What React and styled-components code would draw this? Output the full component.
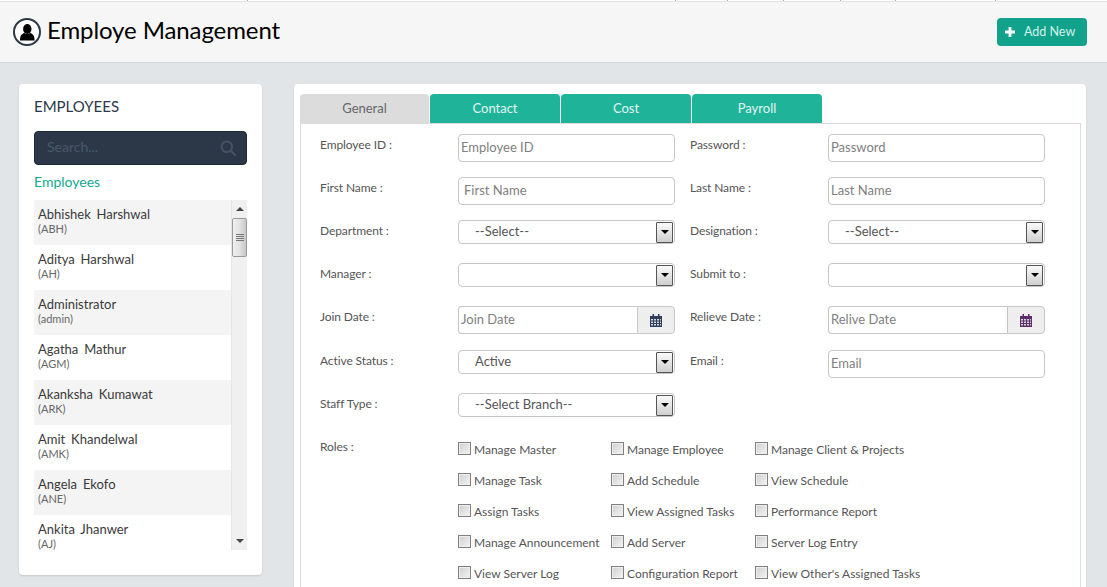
import styled, { createGlobalStyle } from "styled-components";

const employees = [
  ["Abhishek Harshwal", "(ABH)"],
  ["Aditya Harshwal", "(AH)"],
  ["Administrator", "(admin)"],
  ["Agatha Mathur", "(AGM)"],
  ["Akanksha Kumawat", "(ARK)"],
  ["Amit Khandelwal", "(AMK)"],
  ["Angela Ekofo", "(ANE)"],
  ["Ankita Jhanwer", "(AJ)"],
];

const roles = [
  ["Manage Master", "Manage Employee", "Manage Client & Projects"],
  ["Manage Task", "Add Schedule", "View Schedule"],
  ["Assign Tasks", "View Assigned Tasks", "Performance Report"],
  ["Manage Announcement", "Add Server", "Server Log Entry"],
  ["View Server Log", "Configuration Report", "View Other's Assigned Tasks"],
];

// widths of the nav cells cut off at the very top of the page
const navCells = [248, 428, 52, 56, 57, 55, 100];

const UserIcon = () => (
  <svg width="30" height="30" viewBox="0 0 30 30">
    <circle cx="15" cy="15" r="13" fill="#fff" stroke="#2c3848" strokeWidth="2" />
    <ellipse cx="15.300" cy="12" rx="4.200" ry="4.900" fill="#000" />
    <path d="M8 23.500c0-4.500 1.500-6.700 4.500-7.500 1.700 1.200 3.900 1.200 5.600 0 3 .8 4.500 3 4.500 7.500z" fill="#000" />
  </svg>
);

const SearchIcon = () => (
  <svg width="16" height="16" viewBox="0 0 16 16" fill="none" stroke="#445263" strokeWidth="2">
    <circle cx="6.800" cy="6.800" r="5.300" />
    <path d="M10.800 10.800l4.200 4.200" strokeLinecap="round" />
  </svg>
);

const PlusIcon = () => (
  <svg width="10" height="10" viewBox="0 0 10 10">
    <path d="M3.600 0h2.800v3.600H10v2.800H6.400V10H3.600V6.400H0V3.600h3.600z" fill="#fff" />
  </svg>
);

const CalendarIcon = ({ color }) => (
  <svg width="12" height="13" viewBox="0 0 12 13">
    <path d="M0 2h12v11H0z" fill={color} />
    <path d="M2.500 0h1.500v3H2.500zM8 0h1.500v3H8z" fill={color} />
    <path
      d="M1 5h2v1.500H1zM4 5h2v1.500H4zM7 5h2v1.500H7zM10 5h1v1.500h-1zM1 7.500h2V9H1zM4 7.500h2V9H4zM7 7.500h2V9H7zM10 7.500h1V9h-1zM1 10h2v1.500H1zM4 10h2v1.500H4zM7 10h2v1.500H7zM10 10h1v1.500h-1z"
      fill="#d8d8d8"
    />
  </svg>
);

const Field = ({ label, placeholder, wide }) => (
  <>
    <Label>{label}</Label>
    <TextInput placeholder={placeholder} $wide={wide} />
  </>
);

const SelectField = ({ label, value }) => (
  <>
    <Label>{label}</Label>
    <SelectBox>
      <span>{value}</span>
      <SelectArrow />
    </SelectBox>
  </>
);

const DateField = ({ label, placeholder, color }) => (
  <>
    <Label>{label}</Label>
    <DateGroup>
      <DateInput placeholder={placeholder} />
      <DateAddon>
        <CalendarIcon color={color} />
      </DateAddon>
    </DateGroup>
  </>
);

const App = () => {
  return (
    <>
      <GlobalStyle />
      <TopStrip>
        {navCells.map((w, i) => (
          <NavCell key={i} $w={w} />
        ))}
      </TopStrip>
      <Header>
        <Title>
          <UserIcon />
          <h1>Employe Management</h1>
        </Title>
        <AddButton>
          <PlusIcon />
          Add New
        </AddButton>
      </Header>
      <Page>
        <Sidebar>
          <SideTitle>EMPLOYEES</SideTitle>
          <SearchBar>
            <input placeholder="Search..." />
            <SearchIcon />
          </SearchBar>
          <ListTitle>Employees</ListTitle>
          <ListBox>
            <EmployeeList>
              {employees.map(([name, code]) => (
                <EmployeeRow key={code}>
                  <strong>{name}</strong>
                  <small>{code}</small>
                </EmployeeRow>
              ))}
            </EmployeeList>
            <Scrollbar>
              <ScrollArrow $up />
              <ScrollThumb>
                <i />
                <i />
                <i />
                <i />
              </ScrollThumb>
              <ScrollTrack />
              <ScrollArrow />
            </Scrollbar>
          </ListBox>
        </Sidebar>
        <Main>
          <Tabs>
            <Tab $active>General</Tab>
            <Tab>Contact</Tab>
            <Tab>Cost</Tab>
            <Tab>Payroll</Tab>
          </Tabs>
          <TabPanel>
            <FormGrid>
              <Field label="Employee ID :" placeholder="Employee ID" />
              <Field label="Password :" placeholder="Password" />
              <Field label="First Name :" placeholder="First Name" wide />
              <Field label="Last Name :" placeholder="Last Name" />
              <SelectField label="Department :" value="--Select--" />
              <SelectField label="Designation :" value="--Select--" />
              <SelectField label="Manager :" value="" />
              <SelectField label="Submit to :" value="" />
              <DateField label="Join Date :" placeholder="Join Date" color="#2c3e5c" />
              <DateField label="Relieve Date :" placeholder="Relive Date" color="#5c2c6a" />
              <SelectField label="Active Status :" value="Active" />
              <Field label="Email :" placeholder="Email" />
              <SelectField label="Staff Type :" value="--Select Branch--" />
            </FormGrid>
            <RolesRow>
              <Label>Roles :</Label>
              <RolesGrid>
                {roles.flat().map((role) => (
                  <RoleItem key={role}>
                    <CheckBox />
                    {role}
                  </RoleItem>
                ))}
              </RolesGrid>
            </RolesRow>
          </TabPanel>
        </Main>
      </Page>
    </>
  );
};

const GlobalStyle = createGlobalStyle`
  html, body {
    margin: 0;
    height: 587px;
    overflow: hidden;
    background: #e2e5e8;
    font-family: Lato, "Liberation Sans", sans-serif;
  }
  * {
    box-sizing: border-box;
  }
`;
const TopStrip = styled.div`
  height: 2px;
  display: flex;
  background: #fff;
  border-bottom: 1px solid #e4e4e4;
`;
const NavCell = styled.div`
  width: ${(p) => p.$w}px;
  height: 1px;
  border-right: 1px solid #aaa;
`;
const Header = styled.header`
  height: 61px;
  display: flex;
  align-items: center;
  justify-content: space-between;
  padding: 0 20px 0 12px;
  background: #f6f6f6;
  border-bottom: 1px solid #d4d7da;
`;
const Title = styled.div`
  display: flex;
  align-items: center;
  gap: 5px;
  h1 {
    margin: 0 0 5px;
    font-size: 24px;
    font-weight: 400;
    letter-spacing: -0.1px;
    color: #000;
  }
`;
const AddButton = styled.button`
  width: 90px;
  height: 28px;
  display: flex;
  align-items: center;
  gap: 9px;
  padding: 0 0 1px 8px;
  border: none;
  border-radius: 4px;
  background: #10a28a;
  color: #d5f2ec;
  font-family: inherit;
  font-size: 12.500px;
`;
const Page = styled.div`
  display: flex;
  align-items: flex-start;
  gap: 32px;
  padding: 21px 21px 0 19px;
`;
const Sidebar = styled.aside`
  width: 243px;
  height: 491px;
  padding: 13px 15px 0;
  background: #fff;
  border-radius: 4px;
  box-shadow: 0 1px 2px rgba(0, 0, 0, 0.12);
`;
const SideTitle = styled.h2`
  margin: 0;
  font-size: 15px;
  line-height: 18px;
  font-weight: 400;
  color: #2c3848;
`;
const SearchBar = styled.div`
  height: 34px;
  margin-top: 16px;
  display: flex;
  align-items: center;
  justify-content: space-between;
  padding: 0 10px 0 12px;
  background: #2c3848;
  border: 1px solid #202a36;
  border-radius: 4px;
  input {
    width: 150px;
    height: 20px;
    border: none;
    outline: none;
    padding: 0 0 3px;
    background: transparent;
    font-family: inherit;
    font-size: 14px;
    color: #fff;
    &::placeholder {
      color: #4a5869;
      opacity: 1;
    }
  }
`;
const ListTitle = styled.div`
  margin-top: 8px;
  font-size: 14px;
  line-height: 17px;
  color: #13a98f;
`;
const ListBox = styled.div`
  height: 350px;
  margin-top: 10px;
  display: flex;
  overflow: hidden;
`;
const EmployeeList = styled.div`
  width: 197px;
`;
const EmployeeRow = styled.div`
  height: 45px;
  padding: 6px 4px 0;
  display: flex;
  flex-direction: column;
  &:nth-child(odd) {
    background: #f4f4f4;
  }
  strong {
    font-size: 13px;
    line-height: 17px;
    font-weight: 400;
    word-spacing: 2.500px;
    color: #3a3a3a;
  }
  small {
    margin-top: -1px;
    font-size: 11px;
    line-height: 14px;
    color: #666;
  }
`;
const Scrollbar = styled.div`
  width: 16px;
  display: flex;
  flex-direction: column;
  background: #f0f0f0;
  border-left: 1px solid #e6e6e6;
`;
const ScrollArrow = styled.div`
  height: 18px;
  flex: none;
  display: flex;
  align-items: center;
  justify-content: center;
  &::before {
    content: "";
    border-left: 4px solid transparent;
    border-right: 4px solid transparent;
    border-bottom: ${(p) => (p.$up ? "4px solid #444" : "none")};
    border-top: ${(p) => (p.$up ? "none" : "4px solid #444")};
  }
`;
const ScrollThumb = styled.div`
  height: 39px;
  flex: none;
  display: flex;
  flex-direction: column;
  align-items: center;
  justify-content: center;
  gap: 1px;
  border: 1px solid #9a9a9a;
  border-radius: 2px;
  background: linear-gradient(90deg, #f0f0f0, #e2e2e2 50%, #c8c8c8);
  i {
    width: 8px;
    height: 1px;
    background: #777;
  }
`;
const ScrollTrack = styled.div`
  flex: 1;
`;
const Main = styled.main`
  width: 792px;
  height: 520px;
  padding: 10px 5px 0 6px;
  background: #fff;
  border-radius: 4px;
  box-shadow: 0 1px 2px rgba(0, 0, 0, 0.12);
`;
const Tabs = styled.div`
  display: flex;
  gap: 1px;
`;
const Tab = styled.div`
  width: 130px;
  height: 29px;
  display: flex;
  align-items: center;
  justify-content: center;
  padding-bottom: 2px;
  border-radius: 4px 4px 0 0;
  font-size: 13px;
  background: ${(p) => (p.$active ? "#dcdcdc" : "#1fb39a")};
  color: ${(p) => (p.$active ? "#666" : "#e4f6f2")};
  &:first-child {
    width: 129px;
  }
`;
const TabPanel = styled.div`
  height: 481px;
  padding: 0 0 0 19px;
  border: 1px solid #dcdcdc;
  border-width: 1px 1px 0 1px;
`;
const FormGrid = styled.div`
  display: grid;
  grid-template-columns: 138px 232px 138px 217px;
  grid-template-rows: 43px 43px 43px 43px 44px 43px 43px;
  padding-top: 10px;
`;
const Label = styled.label`
  font-size: 12px;
  line-height: 22px;
  letter-spacing: -0.1px;
  color: #555;
`;
const TextInput = styled.input`
  width: 217px;
  height: 28px;
  padding: 0 2px 3px ${(p) => (p.$wide ? "5px" : "2px")};
  border: 1px solid #c6c6c6;
  border-radius: 4px;
  outline: none;
  font-family: inherit;
  font-size: 13px;
  &::placeholder {
    color: #808080;
    opacity: 1;
  }
`;
const SelectBox = styled.div`
  width: 217px;
  height: 24px;
  display: flex;
  align-items: center;
  justify-content: space-between;
  padding: 0 1px 2px 16px;
  border: 1px solid #c6c6c6;
  border-radius: 4px;
  font-size: 13px;
  color: #555;
`;
const SelectArrow = styled.div`
  width: 17px;
  height: 21px;
  flex: none;
  margin-bottom: -2px;
  display: flex;
  align-items: center;
  justify-content: center;
  border: 1px solid #555;
  border-radius: 1px;
  background: linear-gradient(#fafafa, #cfcfcf);
  &::before {
    content: "";
    border-left: 4px solid transparent;
    border-right: 4px solid transparent;
    border-top: 4px solid #000;
  }
`;
const DateGroup = styled.div`
  width: 217px;
  height: 28px;
  display: flex;
`;
const DateInput = styled(TextInput)`
  width: 179px;
  border-radius: 4px 0 0 4px;
  border-right: none;
`;
const DateAddon = styled.div`
  width: 38px;
  display: flex;
  align-items: center;
  justify-content: center;
  background: #eee;
  border: 1px solid #c6c6c6;
  border-radius: 0 4px 4px 0;
`;
const RolesRow = styled.div`
  display: grid;
  grid-template-columns: 138px 1fr;
`;
const RolesGrid = styled.div`
  margin-top: -2px;
  display: grid;
  grid-template-columns: 153px 144px 1fr;
  grid-auto-rows: 31px;
`;
const RoleItem = styled.div`
  display: flex;
  align-items: center;
  gap: 3px;
  white-space: nowrap;
  font-size: 12px;
  color: #555;
`;
const CheckBox = styled.span`
  width: 13px;
  height: 13px;
  flex: none;
  margin-top: -3px;
  border: 1px solid #808080;
  box-shadow: inset 0 0 0 1px #eee;
  background: linear-gradient(135deg, #cfcfcf, #f4f4f4);
`;
export default App;
